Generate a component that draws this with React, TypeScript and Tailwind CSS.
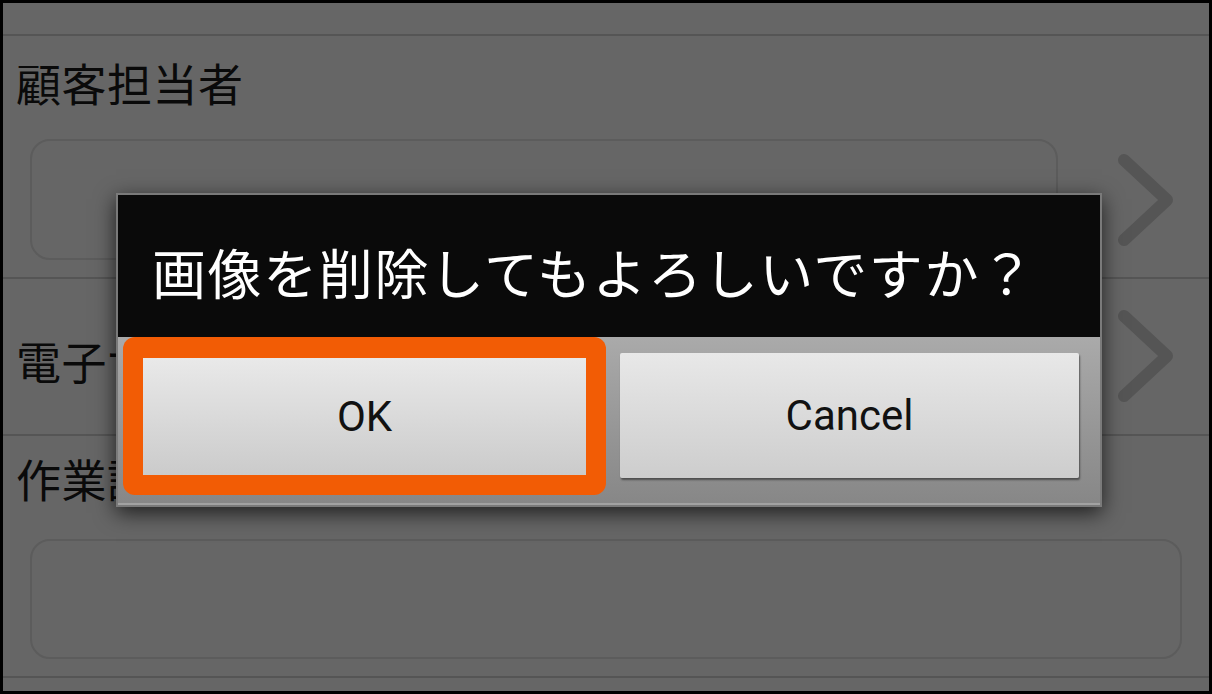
import React from "react";

const Chevron = () => (
    <svg width="67" height="104" viewBox="0 0 67 104" className="shrink-0">
        <polyline
            points="12,12 55,52 12,92"
            fill="none"
            stroke="#555555"
            strokeWidth="12"
            strokeLinecap="round"
            strokeLinejoin="round"
        />
    </svg>
);

const Line = () => <div className="h-[2px] bg-[#555555]" />;

export default function App() {
    const jp = { fontFamily: '"Noto Sans CJK JP", "Noto Sans", sans-serif' };

    return (
        <div className="relative w-[1212px] h-[694px] overflow-hidden border-[3px] border-black bg-[#666666]" style={jp}>
            {/* form behind the dialog */}
            <div className="h-[31px]" />
            <Line />

            <div className="h-[241px] flex flex-col">
                <div className="mt-[24px] pl-[13px] text-[45px] leading-none tracking-[0.5px] text-[#0a0a0a]">顧客担当者</div>
                <div className="mt-[34px] flex items-center pl-[27px]">
                    <div className="w-[1028px] h-[121px] rounded-[20px] border-2 border-[#5c5c5c]" />
                    <div className="ml-[54px]">
                        <Chevron />
                    </div>
                </div>
            </div>
            <Line />

            <div className="h-[155px] flex items-start justify-between">
                <div className="mt-[59px] pl-[13px] text-[45px] leading-none tracking-[0.5px] text-[#0a0a0a]">電子サイン</div>
                <div className="mt-[25px] mr-[30px]">
                    <Chevron />
                </div>
            </div>
            <Line />

            <div className="h-[240px] flex flex-col">
                <div className="mt-[20px] pl-[13px] text-[45px] leading-none tracking-[0.5px] text-[#0a0a0a]">作業記録</div>
                <div className="mt-[38px] pl-[27px]">
                    <div className="w-[1152px] h-[120px] rounded-[20px] border-2 border-[#5c5c5c]" />
                </div>
            </div>
            <Line />

            {/* confirm dialog */}
            <div className="absolute left-[113px] top-[190px] w-[986px] flex flex-col border-2 border-[#7a7a7a] shadow-[0_6px_20px_rgba(0,0,0,0.7)]">
                <div className="h-[142px] bg-[#0a0a0a] pt-[50px] pl-[34px]">
                    <div className="text-[54px] leading-none tracking-[1.6px] text-white whitespace-nowrap">画像を削除してもよろしいですか？</div>
                </div>
                <div className="h-[168px] flex items-start bg-linear-to-b from-[#aaaaaa] to-[#878787] border-b-2 border-[#a2a2a2]">
                    <div className="ml-[5px] w-[483px] h-[158px] rounded-[12px] bg-[#f25c05] pt-[21px] px-[20px]">
                        <div
                            className="h-[117px] flex items-center justify-center bg-linear-to-b from-[#e9e9e9] to-[#cbcbcb] text-[42px] text-[#111111]"
                            style={{ fontFamily: "Roboto, sans-serif" }}
                        >
                            OK
                        </div>
                    </div>
                    <div
                        className="mt-[16px] ml-[14px] w-[459px] h-[125px] flex items-center justify-center rounded-[2px] bg-linear-to-b from-[#e8e8e8] to-[#cdcdcd] shadow-[1px_2px_2px_rgba(0,0,0,0.45)] text-[42px] text-[#111111]"
                        style={{ fontFamily: "Roboto, sans-serif" }}
                    >
                        Cancel
                    </div>
                </div>
            </div>
        </div>
    );
}
